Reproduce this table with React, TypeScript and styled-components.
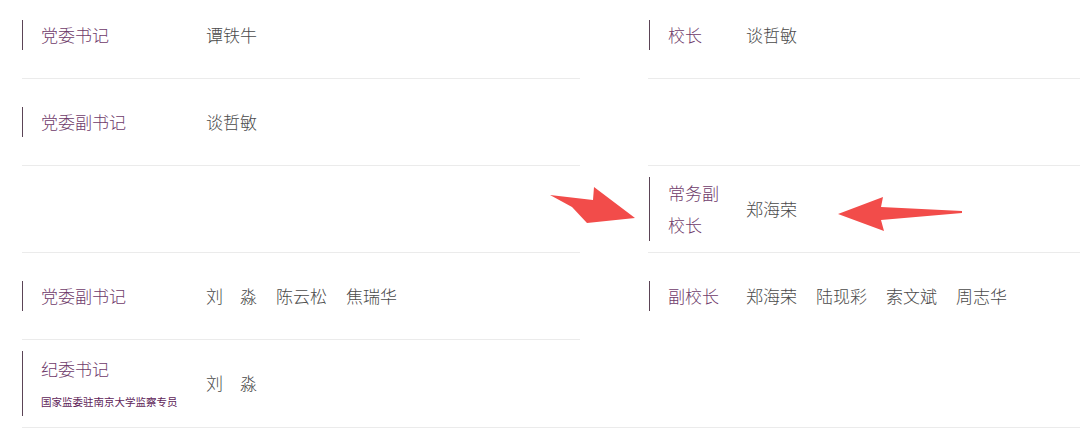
import React from "react";
import styled, { createGlobalStyle } from "styled-components";

const GlobalStyle = createGlobalStyle`
    html, body {
        margin: 0;
        padding: 0;
        background: #fff;
        overflow: hidden;
    }
    body {
        font-family: "Noto Sans CJK SC", "Microsoft YaHei", "Noto Sans", sans-serif;
        font-weight: 300;
    }
`;

const Page = styled.div`
    position: relative;
    width: 1080px;
    height: 429px;
    overflow: hidden;
`;

const Table = styled.div`
    display: flex;
    gap: 68px;
    margin: -8px 0 0 22px;
    border-bottom: 1px solid #ebebeb;
`;

const Column = styled.div<{ $w?: number }>`
    display: flex;
    flex-direction: column;
    width: ${p => (p.$w ? `${p.$w}px` : "auto")};
    flex: ${p => (p.$w ? "none" : "1")};
`;

const Row = styled.div<{ $noLine?: boolean }>`
    box-sizing: border-box;
    height: 87px;
    display: flex;
    align-items: center;
    border-bottom: 1px solid ${p => (p.$noLine ? "transparent" : "#ebebeb")};
`;

const Entry = styled.div<{ $inset?: number }>`
    display: flex;
    align-items: center;
    margin-left: ${p => p.$inset ?? 0}px;
    padding-left: 18px;
    border-left: 1px solid #5b4456;
`;

const Label = styled.div<{ $w: number }>`
    box-sizing: border-box;
    width: ${p => p.$w}px;
    padding-right: 18px;
    color: #6e3a6a;
    font-size: 17px;
    line-height: 30px;
`;

const WrapLabel = styled(Label)`
    line-height: 32px;
`;

const Title = styled.div`
    line-height: 36px;
`;

const Sub = styled.div`
    font-size: 10.5px;
    font-weight: 400;
    line-height: 29px;
    color: #5e1d58;
    white-space: nowrap;
`;

const Names = styled.div`
    display: flex;
    gap: 19px;
    color: #4a4a4a;
    font-size: 17px;
    line-height: 30px;
    white-space: nowrap;
`;

const Arrow = styled.svg<{ $x: number; $y: number }>`
    position: absolute;
    left: ${p => p.$x}px;
    top: ${p => p.$y}px;
    overflow: visible;
`;

function NameList({ names }: { names: string[] }) {
    return (
        <Names>
            {names.map(n => (
                <span key={n}>{n}</span>
            ))}
        </Names>
    );
}

export default function App() {
    return (
        <Page>
            <GlobalStyle />
            <Table>
                <Column $w={558}>
                    <Row>
                        <Entry>
                            <Label $w={165}>党委书记</Label>
                            <NameList names={["谭铁牛"]} />
                        </Entry>
                    </Row>
                    <Row>
                        <Entry>
                            <Label $w={165}>党委副书记</Label>
                            <NameList names={["谈哲敏"]} />
                        </Entry>
                    </Row>
                    <Row />
                    <Row>
                        <Entry>
                            <Label $w={165}>党委副书记</Label>
                            <NameList names={["刘　淼", "陈云松", "焦瑞华"]} />
                        </Entry>
                    </Row>
                    <Row $noLine>
                        <Entry>
                            <Label $w={165}>
                                <Title>纪委书记</Title>
                                <Sub>国家监委驻南京大学监察专员</Sub>
                            </Label>
                            <NameList names={["刘　淼"]} />
                        </Entry>
                    </Row>
                </Column>
                <Column>
                    <Row>
                        <Entry $inset={1}>
                            <Label $w={78}>校长</Label>
                            <NameList names={["谈哲敏"]} />
                        </Entry>
                    </Row>
                    <Row />
                    <Row>
                        <Entry $inset={1}>
                            <WrapLabel $w={78}>常务副校长</WrapLabel>
                            <NameList names={["郑海荣"]} />
                        </Entry>
                    </Row>
                    <Row $noLine>
                        <Entry $inset={1}>
                            <Label $w={78}>副校长</Label>
                            <NameList names={["郑海荣", "陆现彩", "索文斌", "周志华"]} />
                        </Entry>
                    </Row>
                    <Row $noLine />
                </Column>
            </Table>

            <Arrow $x={548} $y={185} width="92" height="42" viewBox="0 0 92 42">
                <polygon points="2,10 45,15 46,2 87,33 39,38 24,22" fill="#f24c4a" />
            </Arrow>
            <Arrow $x={835} $y={193} width="130" height="42" viewBox="0 0 130 42">
                <polygon points="3,21 48,4 46,14 127,18 127,20 46,27 49,38" fill="#f24c4a" />
            </Arrow>
        </Page>
    );
}
